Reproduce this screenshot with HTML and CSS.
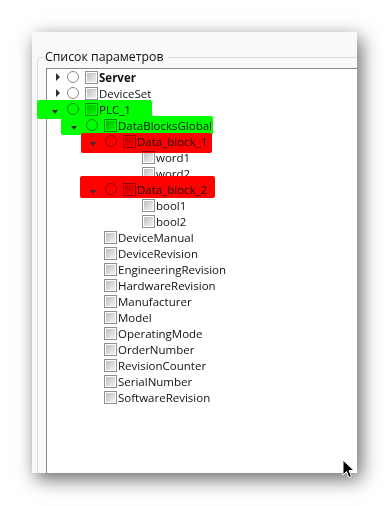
FILE: index.html
```html
<!DOCTYPE html>
<html>
  <head>
    <meta charset="UTF-8" />
    <title>Список параметров</title>
    <link rel="stylesheet" href="styles.css">
  </head>
  <body>
    <div class="screen">
      <div class="window">
        <fieldset class="group">
          <legend>Список параметров</legend>
          <div class="tree">
            <ul class="nodes">
              <li>
                <div class="row"><span class="exp closed"></span><span class="dot"></span><span class="cb"></span><span class="label current">Server</span></div>
              </li>
              <li>
                <div class="row"><span class="exp closed"></span><span class="dot"></span><span class="cb"></span><span class="label">DeviceSet</span></div>
              </li>
              <li>
                <div class="row"><span class="mark green plc"></span><span class="exp open"></span><span class="dot"></span><span class="cb"></span><span class="label">PLC_1</span></div>
                <ul class="nodes">
                  <li>
                    <div class="row"><span class="mark green dbg"></span><span class="exp open"></span><span class="dot"></span><span class="cb"></span><span class="label">DataBlocksGlobal</span></div>
                    <ul class="nodes">
                      <li>
                        <div class="row"><span class="mark red db1"></span><span class="exp open"></span><span class="dot"></span><span class="cb"></span><span class="label">Data_block_1</span></div>
                        <ul class="nodes">
                          <li><div class="row leaf"><span class="cb"></span><span class="label">word1</span></div></li>
                          <li><div class="row leaf"><span class="cb"></span><span class="label">word2</span></div></li>
                        </ul>
                      </li>
                      <li>
                        <div class="row"><span class="mark red db2"></span><span class="exp open"></span><span class="dot"></span><span class="cb"></span><span class="label">Data_block_2</span></div>
                        <ul class="nodes">
                          <li><div class="row leaf"><span class="cb"></span><span class="label">bool1</span></div></li>
                          <li><div class="row leaf"><span class="cb"></span><span class="label">bool2</span></div></li>
                        </ul>
                      </li>
                    </ul>
                  </li>
                  <li><div class="row leaf"><span class="cb"></span><span class="label">DeviceManual</span></div></li>
                  <li><div class="row leaf"><span class="cb"></span><span class="label">DeviceRevision</span></div></li>
                  <li><div class="row leaf"><span class="cb"></span><span class="label">EngineeringRevision</span></div></li>
                  <li><div class="row leaf"><span class="cb"></span><span class="label">HardwareRevision</span></div></li>
                  <li><div class="row leaf"><span class="cb"></span><span class="label">Manufacturer</span></div></li>
                  <li><div class="row leaf"><span class="cb"></span><span class="label">Model</span></div></li>
                  <li><div class="row leaf"><span class="cb"></span><span class="label">OperatingMode</span></div></li>
                  <li><div class="row leaf"><span class="cb"></span><span class="label">OrderNumber</span></div></li>
                  <li><div class="row leaf"><span class="cb"></span><span class="label">RevisionCounter</span></div></li>
                  <li><div class="row leaf"><span class="cb"></span><span class="label">SerialNumber</span></div></li>
                  <li><div class="row leaf"><span class="cb"></span><span class="label">SoftwareRevision</span></div></li>
                </ul>
              </li>
            </ul>
          </div>
        </fieldset>
      </div>
      <svg class="cursor" width="14" height="21" viewBox="0 0 14 21">
        <path d="M1 1 L1 16 L4.5 12.5 L7 18.5 L9.5 17.5 L7 11.5 L12 11.5 Z" fill="#000" stroke="#fff" stroke-width="1" stroke-linejoin="round" />
      </svg>
    </div>
  </body>
</html>
```

FILE: styles.css
```css
body {
  margin: 0;
  background: #fff;
  font-family: "Open Sans", "Noto Sans", sans-serif;
  font-size: 11.5px;
  color: #101010;
}
.screen {
  position: relative;
  height: 506px;
  overflow: hidden;
}
.window {
  margin: 32px 0 0 32px;
  width: 325px;
  height: 441px;
  box-sizing: border-box;
  padding: 17px 0 0 5px;
  background: #f9f9f9;
  box-shadow: 4px 6px 18px rgba(0, 0, 0, 0.6);
  overflow: hidden;
}
.group {
  margin: 0;
  padding: 3px 8px 0;
  width: 350px;
  height: 470px;
  box-sizing: border-box;
  min-width: 0;
  border: 1px solid #d5dfe5;
  border-radius: 4px;
}
.group legend {
  margin-left: -2px;
  padding: 0 4px 0 1px;
  line-height: 16px;
  font-size: 12.3px;
}
.tree {
  width: 330px;
  height: 430px;
  background: #fff;
  border: 1px solid #828790;
}
.nodes {
  list-style: none;
  margin: 0;
  padding: 0;
}
.nodes .nodes {
  padding-left: 19px;
}
.row {
  position: relative;
  display: flex;
  align-items: center;
  width: max-content;
  height: 16px;
}
.row.leaf {
  padding-left: 38px;
}
.label {
  position: relative;
  top: 1px;
  line-height: 16px;
  white-space: nowrap;
}
.label.current {
  font-weight: bold;
}
.exp {
  position: relative;
  width: 20px;
  height: 16px;
}
.exp::before {
  content: "";
  position: absolute;
}
.exp.closed::before {
  left: 9px;
  top: 4px;
  border-left: 4px solid #303030;
  border-top: 4px solid transparent;
  border-bottom: 4px solid transparent;
}
.exp.open::before {
  left: 5px;
  top: 9px;
  border-top: 4px solid #303030;
  border-left: 3px solid transparent;
  border-right: 3px solid transparent;
}
.dot {
  width: 10px;
  height: 10px;
  margin-right: 6px;
  border: 1px solid #8b8b8b;
  border-radius: 50%;
  mix-blend-mode: multiply;
}
.cb {
  width: 9px;
  height: 9px;
  padding: 1px;
  margin-right: 1px;
  border: 1px solid #8e8f8f;
  background: linear-gradient(135deg, #bcc0c4, #f2f2f2) content-box, #fff;
  mix-blend-mode: multiply;
}

/* hand-painted highlights over the tree */
.mark {
  position: absolute;
  border-radius: 2px;
}
.mark.green {
  background: #00ff00;
}
.mark.red {
  background: #ff0000;
}
.mark.plc {
  left: -10px;
  top: -1px;
  width: 115px;
  height: 19px;
}
.mark.dbg {
  left: -5px;
  top: -1px;
  width: 152px;
  height: 19px;
}
.mark.db1 {
  left: -4px;
  top: 0;
  width: 131px;
  height: 20px;
}
.mark.db2 {
  left: -5px;
  top: -5px;
  width: 135px;
  height: 22px;
}
.cursor {
  position: absolute;
  left: 342px;
  top: 459px;
}
```
